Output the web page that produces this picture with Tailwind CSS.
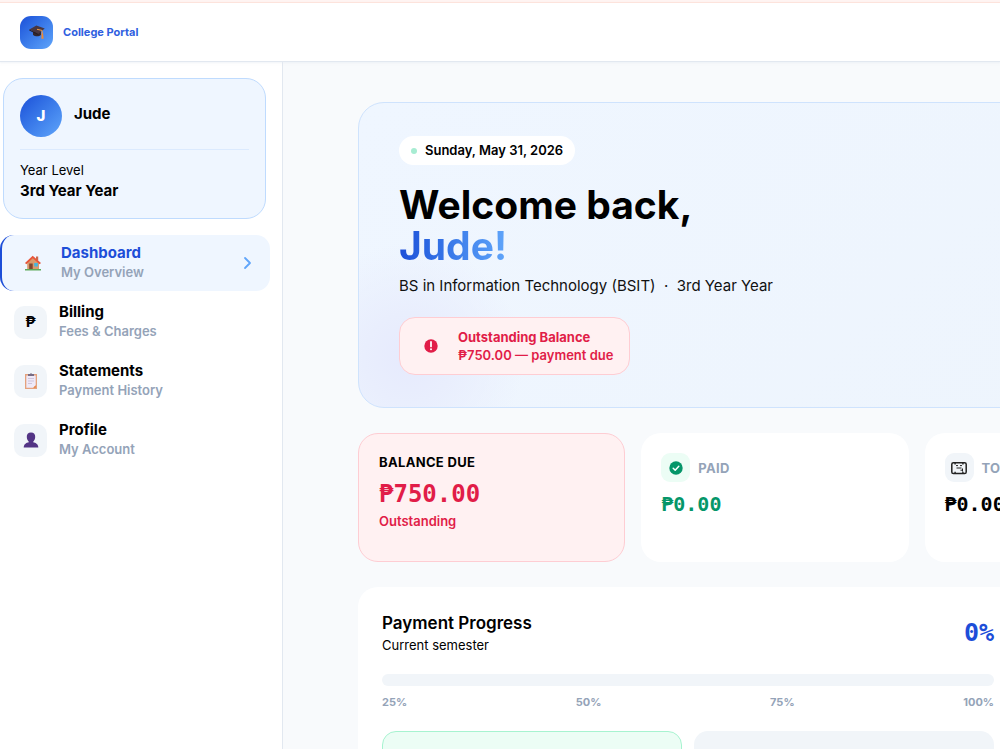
<!DOCTYPE html>
<html lang="en">
<head>
  <meta charset="UTF-8">
  <meta name="viewport" content="width=device-width, initial-scale=1.0">
  <title>College Portal - Dashboard</title>
  <script src="https://cdn.jsdelivr.net/npm/@tailwindcss/browser@4"></script>
</head>
<body class="h-screen flex flex-col overflow-hidden bg-[#f8fafc] text-black font-['Inter','Noto_Sans',sans-serif]">
  <div class="h-[3px] shrink-0 bg-[#fff4f2] border-b border-[#fee4dc]"></div>

  <!-- Top bar -->
  <header class="h-[59px] shrink-0 bg-white border-b border-[#e2e8f0] flex items-center px-5 gap-[10px] shadow-[0_1px_2px_#e2e8f080] relative">
    <div class="size-[33px] rounded-[11px] bg-linear-to-br from-[#1d4ed8] to-[#60a5fa] flex items-center justify-center">
      <svg class="size-4" viewBox="0 0 16 16">
        <path d="M4 7.5v3.2c1.8 1.8 5.6 2.2 8 .3V8z" fill="#33272f"/>
        <path d="M.3 5.6 7.4 1.5 15.7 4.6 9.2 10z" fill="#483641"/>
        <path d="M.3 5.6 9.2 10v.9L.3 6.4z" fill="#251c23"/>
        <path d="M8 5.3l5 1.1.4 5" fill="none" stroke="#f59e42" stroke-width="1"/>
        <path d="M12.6 9.6h1.5l.5 5.2h-2.2z" fill="#f08a32"/>
      </svg>
    </div>
    <a href="#" class="text-[11px] leading-4 font-bold text-[#2f5fe0]">College Portal</a>
  </header>

  <div class="flex flex-1 min-h-0">
    <!-- Sidebar -->
    <aside class="w-[283px] shrink-0 bg-white border-r border-[#e2e8f0] pt-4">
      <section class="ml-[3px] mr-4 h-[141px] rounded-[20px] border border-[#bfdbfe] bg-[#eff6ff] px-4 pt-4">
        <div class="flex items-center gap-3 pb-3 border-b border-[#dbeafe]">
          <div class="size-[42px] rounded-full bg-linear-to-br from-[#1d4ed8] to-[#60a5fa] flex items-center justify-center text-white text-[15px] font-extrabold">J</div>
          <p class="pb-1 text-[15px] leading-5 font-bold">Jude</p>
        </div>
        <p class="mt-[11px] text-[13px] leading-[18px]">Year Level</p>
        <p class="text-[15px] leading-6 font-bold">3rd Year Year</p>
      </section>

      <nav class="mt-4 mr-3 flex flex-col gap-[3px]">
        <a href="#" class="h-14 flex items-center gap-3 rounded-[14px] border-l-2 border-[#1d4ed8] bg-[#eff6ff] pl-[14px] pr-4">
          <span class="size-[33px] rounded-[10px] flex items-center justify-center">
            <svg class="size-4" viewBox="0 0 16 16">
              <path d="M11 1.5h2.2v4H11z" fill="#c9694c"/>
              <path d="M2.2 7 8 2l6 5v7.5H2.2z" fill="#d99a6c"/>
              <path d="M0 8 7.7.8 16 8l-1.4 1.2-6.8-6-6.5 6z" fill="#e8553a"/>
              <path d="M4.2 8.5h3.5v6H4.2z" fill="#80462f"/>
              <path d="M9.2 8h3.6v3.5H9.2z" fill="#45b7dd"/>
              <path d="M0 14h16v1.5H0z" fill="#5faa5a"/>
            </svg>
          </span>
          <span class="flex-1 pb-0.5">
            <span class="block text-[15px] leading-5 font-bold text-[#1d4ed8]">Dashboard</span>
            <span class="block text-[13px] leading-[18px] font-semibold text-[#94a3b8]">My Overview</span>
          </span>
          <svg class="size-[14px]" viewBox="0 0 14 14" fill="none" stroke="#60a5fa" stroke-width="1.8" stroke-linecap="round" stroke-linejoin="round"><path d="M5 2l5 5-5 5"/></svg>
        </a>
        <a href="#" class="h-14 flex items-center gap-3 pl-[14px] pr-4">
          <span class="size-[33px] rounded-[10px] bg-[#f1f5f9] flex items-center justify-center text-[15px] font-bold">₱</span>
          <span class="flex-1 pb-0.5">
            <span class="block text-[15px] leading-5 font-bold">Billing</span>
            <span class="block text-[13px] leading-[18px] font-semibold text-[#94a3b8]">Fees &amp; Charges</span>
          </span>
        </a>
        <a href="#" class="h-14 flex items-center gap-3 pl-[14px] pr-4">
          <span class="size-[33px] rounded-[10px] bg-[#f1f5f9] flex items-center justify-center">
            <svg class="size-4" viewBox="0 0 16 16">
              <path d="M2 1h12v15H2z" fill="#e5a27d"/>
              <path d="M3.3 2.5h9.4v10l-2.4 2.3h-7z" fill="#eee9f8"/>
              <path d="M12.7 12.3v2.5h-2.5z" fill="#e58140"/>
              <path d="M5 1h2l1-1 1 1h2v2H5z" fill="#776c84"/>
              <path d="M5 5.5h6M5 8h6M5 10.5h4" stroke="#cfc5dc" stroke-width="1"/>
            </svg>
          </span>
          <span class="flex-1 pb-0.5">
            <span class="block text-[15px] leading-5 font-bold">Statements</span>
            <span class="block text-[13px] leading-[18px] font-semibold text-[#94a3b8]">Payment History</span>
          </span>
        </a>
        <a href="#" class="h-14 flex items-center gap-3 pl-[14px] pr-4">
          <span class="size-[33px] rounded-[10px] bg-[#f1f5f9] flex items-center justify-center">
            <svg class="size-4" viewBox="0 0 16 16" fill="#533485">
              <path d="M8 .5c3 0 4.4 1.8 4.2 4.5-.1 2-.9 3.6-2 4.7v1.2H5.8V9.7C4.7 8.6 3.9 7 3.8 5 3.6 2.3 5 .5 8 .5z"/>
              <path d="M.7 15.5c0-3.2 2.3-4.8 5.3-5.3h4c3 .5 5.3 2.1 5.3 5.3z"/>
            </svg>
          </span>
          <span class="flex-1 pb-0.5">
            <span class="block text-[15px] leading-5 font-bold">Profile</span>
            <span class="block text-[13px] leading-[18px] font-semibold text-[#94a3b8]">My Account</span>
          </span>
        </a>
      </nav>
    </aside>

    <main class="flex-1 min-w-0 overflow-hidden pt-10 pl-[75px]">
      <div class="min-w-[1117px]">
        <!-- Welcome -->
        <section class="h-[306px] rounded-[26px] border border-[#cfe3fd] bg-[radial-gradient(circle_at_50px_255px,#e6eafd_0,#e9eefd_45px,#edf3fe00_115px),linear-gradient(135deg,#eff6ff,#edf4fc)] px-10 pt-[33px]">
          <div class="flex w-fit items-center gap-2 h-[29px] rounded-full bg-white px-3 text-[13px] font-semibold">
            <span class="size-[6px] rounded-full bg-[#a7ecd2]"></span>
            Sunday, May 31, 2026
          </div>
          <h1 class="mt-[19px] text-[39px] leading-[41px] font-bold">
            <span class="block">Welcome back,</span>
            <span class="block w-fit bg-linear-to-r from-[#1d4ed8] to-[#60a5fa] bg-clip-text text-transparent">Jude!</span>
          </h1>
          <p class="mt-2 text-[15px] leading-6 text-[#111111] whitespace-pre">BS in Information Technology (BSIT)  ·  3rd Year Year</p>
          <div class="mt-[19px] flex w-fit items-center h-[58px] rounded-[16px] border border-[#fecdd3] bg-[#fff1f2] pl-6 pr-4 gap-5 text-[#e11d48]">
            <svg class="size-[14px]" viewBox="0 0 14 14"><circle cx="7" cy="7" r="6.7" fill="#e11d48"/><path d="M7 3v4.4" stroke="#fff" stroke-width="1.8" stroke-linecap="round"/><circle cx="7" cy="10.3" r="1" fill="#fff"/></svg>
            <div class="text-[13px] leading-[18px] font-bold">
              <p>Outstanding Balance</p>
              <p class="font-semibold">₱750.00 — payment due</p>
            </div>
          </div>
        </section>

        <!-- Stats -->
        <section class="mt-[25px] grid grid-cols-4 gap-4">
          <article class="h-[129px] rounded-[20px] border border-[#fecdd3] bg-[#fff1f2] px-5 pt-[19px]">
            <h2 class="text-[13px] leading-[18px] font-bold tracking-wide">BALANCE DUE</h2>
            <p class="mt-[7px] text-[24px] leading-8 font-bold text-[#e11d48] font-['DejaVu_Sans_Mono',monospace]">₱750.00</p>
            <p class="mt-0.5 text-[13px] leading-[18px] font-semibold text-[#e11d48]">Outstanding</p>
          </article>
          <article class="h-[129px] rounded-[20px] bg-white px-5 pt-5">
            <div class="flex items-center gap-2">
              <span class="size-[29px] rounded-[9px] bg-[#ecfdf5] flex items-center justify-center">
                <svg class="size-[14px]" viewBox="0 0 14 14"><circle cx="7" cy="7" r="6.7" fill="#059669"/><path d="M4.2 7.2l2 2 3.6-3.9" fill="none" stroke="#fff" stroke-width="1.5" stroke-linecap="round" stroke-linejoin="round"/></svg>
              </span>
              <h2 class="text-[13px] leading-[18px] font-bold tracking-wide text-[#94a3b8]">PAID</h2>
            </div>
            <p class="mt-2 text-[20px] leading-7 font-bold text-[#059669] font-['DejaVu_Sans_Mono',monospace]">₱0.00</p>
          </article>
          <article class="h-[129px] rounded-[20px] bg-white px-5 pt-5">
            <div class="flex items-center gap-2">
              <span class="size-[29px] rounded-[9px] bg-[#f1f5f9] flex items-center justify-center">
                <svg class="size-4" viewBox="0 0 16 16" fill="none" stroke="#222" stroke-linejoin="round">
                  <rect x=".8" y="2.7" width="14.4" height="10.8" rx="1.6" stroke-width="1.5"/>
                  <path d="M3.4 3.6h1.4M11.200 3.600h1.400M3.400 12.600h1.400M11.200 12.600h1.400" stroke-width="1.800"/>
                  <path d="M5 5.600h2M9 5.600h2M5.500 8h5M9.500 10.200h2.500M11.500 8.500v3" stroke-width="1"/>
                </svg>
              </span>
              <h2 class="text-[13px] leading-[18px] font-bold tracking-wide text-[#94a3b8]">TOTAL</h2>
            </div>
            <p class="mt-2 text-[20px] leading-7 font-bold font-['DejaVu_Sans_Mono',monospace]">₱0.00</p>
          </article>
        </section>

        <!-- Progress -->
        <section class="mt-[25px] w-[660px] h-[400px] rounded-[20px] bg-white px-6 pt-6">
          <div class="flex items-center justify-between">
            <div>
              <h2 class="text-[17px] leading-6 font-semibold">Payment Progress</h2>
              <p class="text-[13px] leading-5">Current semester</p>
            </div>
            <p class="text-[25px] leading-8 font-bold text-[#1d4ed8] font-['DejaVu_Sans_Mono',monospace]">0%</p>
          </div>
          <div class="mt-[19px] h-3 rounded-full bg-[#f1f5f9]" role="progressbar" aria-label="Payment progress" aria-valuenow="0" aria-valuemin="0" aria-valuemax="100"></div>
          <div class="mt-2 flex justify-between text-[11px] leading-4 font-bold text-[#94a3b8]">
            <span>25%</span><span>50%</span><span>75%</span><span>100%</span>
          </div>
          <div class="mt-[21px] grid grid-cols-2 gap-3">
            <div class="h-20 rounded-[14px] border border-[#a7f3d0] bg-[#ecfdf5]"></div>
            <div class="h-20 rounded-[14px] bg-[#f1f5f9]"></div>
          </div>
        </section>
      </div>
    </main>
  </div>
</body>
</html>
